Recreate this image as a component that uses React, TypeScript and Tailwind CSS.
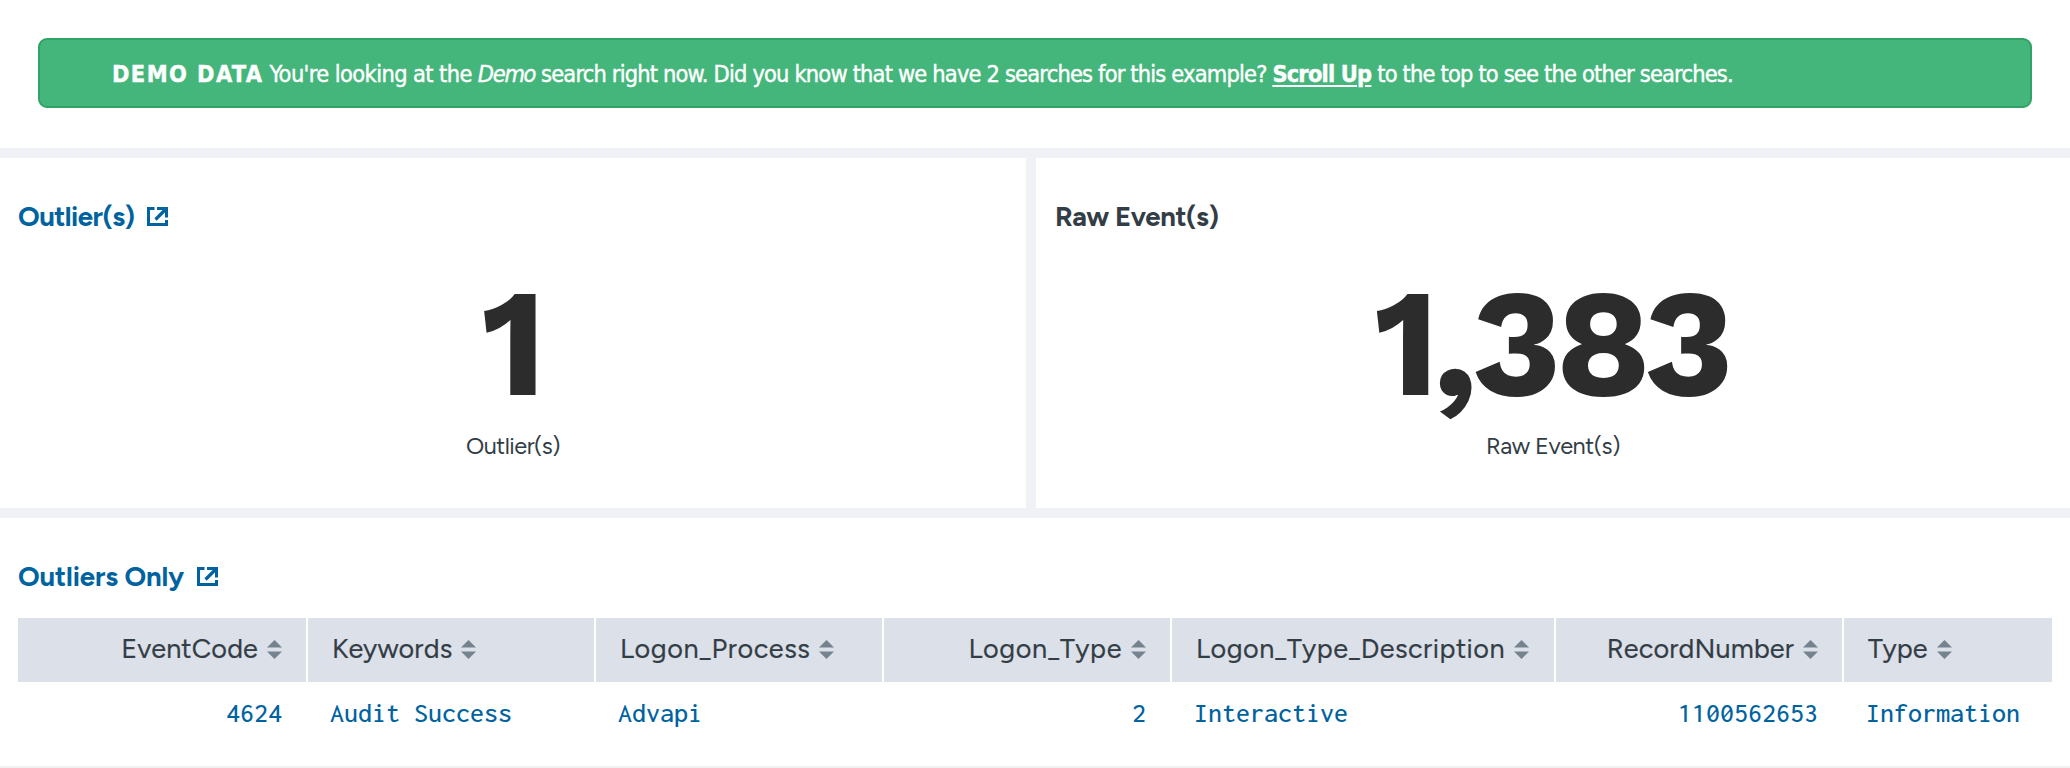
import { clsx } from "clsx";

type Column = { name: string; value: string; numeric?: boolean; tracking: string };

const columns: Column[] = [
  { name: "EventCode", value: "4624", numeric: true, tracking: "tracking-[0.15px]" },
  { name: "Keywords", value: "Audit Success", tracking: "tracking-[0.2px]" },
  { name: "Logon_Process", value: "Advapi", tracking: "tracking-[0.58px]" },
  { name: "Logon_Type", value: "2", numeric: true, tracking: "tracking-[0.6px]" },
  { name: "Logon_Type_Description", value: "Interactive", tracking: "tracking-[0.48px]" },
  { name: "RecordNumber", value: "1100562653", numeric: true, tracking: "tracking-[0.14px]" },
  { name: "Type", value: "Information", tracking: "tracking-[0px]" },
];

function ExternalIcon() {
  return (
    <svg viewBox="0 0 21 19" className="mt-[7px] h-[19px] w-[21px] fill-none stroke-current">
      <path d="M7.5 1.5H1.5V17.5H19.5V13" strokeWidth="3" />
      <path d="M10 1.5H19.5V10.5" strokeWidth="3" />
      <path d="M19.5 1.5L8.5 12.5" strokeWidth="3.2" />
    </svg>
  );
}

function SortIcon() {
  return (
    <svg viewBox="0 0 15 19" className="h-[19px] w-[15px] shrink-0 fill-[#75838f]">
      <path d="M0 7.6L7.5 0L15 7.6Z" />
      <path d="M0 11.4L7.5 19L15 11.4Z" />
    </svg>
  );
}

function Metric({ value, label, tracking }: { value: string; label: string; tracking: string }) {
  return (
    <div className="flex flex-col items-center pt-9">
      <div className="pr-[4px] font-['Work_Sans','Inter',sans-serif] text-[152px] leading-[146px] font-bold tracking-[-6px] text-[#2c2c2c]">{value}</div>
      <div className={clsx("mt-[14px] text-[23.5px] leading-8", tracking)}>{label}</div>
    </div>
  );
}

export default function App() {
  return (
    <div className="min-h-[768px] w-[2070px] bg-white font-['Figtree','Inter',sans-serif] text-[#333d46]">
      <div className="h-[148px] px-[38px] pt-[38px]">
        <div className="flex h-[70px] items-center rounded-[9px] border-2 border-[#31a266] bg-[#45b67b] pt-[3px] pl-[72px] font-['DejaVu_Sans_Condensed','DejaVu_Sans',sans-serif] text-[23.4px] whitespace-pre text-white [-webkit-text-stroke:0.4px_white]">
          <b className="tracking-[1.4px]">DEMO DATA</b>
          <span className="tracking-[-0.82px]">
            <span className="tracking-[-0.6px]"> You're looking at the </span>
            <i className="tracking-[-1.3px]">Demo</i> search right now. Did you know that we have 2 searches for this example? <b className="underline decoration-2 underline-offset-3">Scroll Up</b> to the top to see the other searches.
          </span>
        </div>
      </div>
      <div className="flex h-[370px] gap-[10px] border-y-[10px] border-[#f0f1f4] bg-[#f0f1f4]">
        <section className="w-[1026px] bg-white pt-[42px]">
          <h2 className="flex gap-[12px] pl-[18px] text-[27.5px] leading-[34px] font-bold tracking-[-0.5px] text-[#0063a0]">Outlier(s)<ExternalIcon /></h2>
          <Metric value="1" label="Outlier(s)" tracking="tracking-[-0.5px]" />
        </section>
        <section className="flex-1 bg-white pt-[42px]">
          <h2 className="pl-[19px] text-[27.5px] leading-[34px] font-bold tracking-[-0.38px]">Raw Event(s)</h2>
          <Metric value="1,383" label="Raw Event(s)" tracking="tracking-[-0.4px]" />
        </section>
      </div>
      <section className="h-[250px] border-b-2 border-[#f0f1f3] px-[18px] pt-[42px]">
        <h2 className="flex gap-[13px] text-[27.5px] leading-[34px] font-bold tracking-[-0.1px] text-[#0063a0]">Outliers Only<ExternalIcon /></h2>
        <div className="mt-6 grid grid-cols-[288px_286px_286px_286px_382px_286px_208px] gap-x-[2px]">
          {columns.map((c) => (
            <div key={c.name} className={clsx("flex h-16 items-center gap-[9px] bg-[#dce0e8] pb-[2px] text-[27px] [-webkit-text-stroke:0.2px_#333d46]", c.tracking, c.numeric ? "justify-end pr-6" : "pl-6")}>
              {c.name}
              <SortIcon />
            </div>
          ))}
          {columns.map((c) => (
            <div key={c.value} className={clsx("flex h-16 items-center pb-[3px] font-['Inconsolata','DejaVu_Sans_Mono',monospace] text-[28px] font-medium text-[#0063a0]", c.numeric ? "justify-end pr-6" : "pl-[22px]")}>
              {c.value}
            </div>
          ))}
        </div>
      </section>
    </div>
  );
}
